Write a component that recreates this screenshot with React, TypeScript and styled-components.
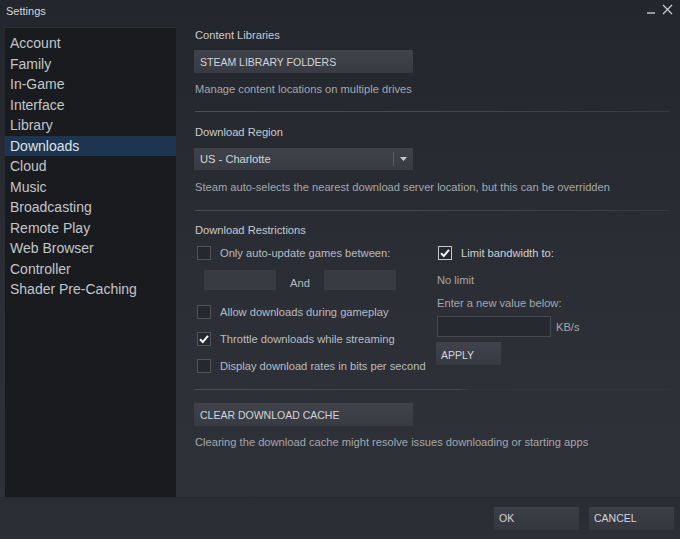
import React from "react";
import styled, { createGlobalStyle } from "styled-components";

const GlobalStyle = createGlobalStyle`
  html, body {
    margin: 0;
    padding: 0;
    background: #25282e;
  }
  * {
    box-sizing: border-box;
  }
`;

const menuItems = [
  "Account",
  "Family",
  "In-Game",
  "Interface",
  "Library",
  "Downloads",
  "Cloud",
  "Music",
  "Broadcasting",
  "Remote Play",
  "Web Browser",
  "Controller",
  "Shader Pre-Caching",
];

function Check({ checked, bright }: { checked?: boolean; bright?: boolean }) {
  return (
    <Box bright={bright}>
      {checked && (
        <svg width="12" height="12" viewBox="0 0 12 12">
          <path
            d="M2 6.2 L4.8 9 L10 2.8"
            fill="none"
            stroke="#f2f3f5"
            strokeWidth="2"
          />
        </svg>
      )}
    </Box>
  );
}

function App() {
  return (
    <>
      <GlobalStyle />
      <Window>
        <TitleBar>
          <Title>Settings</Title>
          <WinControls>
            <svg width="10" height="10" viewBox="0 0 10 10">
              <path d="M1 8 H9" stroke="#c9cbcf" strokeWidth="1.4" />
            </svg>
            <svg width="11" height="11" viewBox="0 0 11 11">
              <path d="M1 1 L10 10 M10 1 L1 10" stroke="#c9cbcf" strokeWidth="1.3" />
            </svg>
          </WinControls>
        </TitleBar>

        <Main>
          <Sidebar>
            {menuItems.map((item) => (
              <MenuItem key={item} active={item === "Downloads"}>
                {item}
              </MenuItem>
            ))}
          </Sidebar>

          <Content>
            <SectionTitle>Content Libraries</SectionTitle>
            <WideButton style={{ marginTop: 8 }}>STEAM LIBRARY FOLDERS</WideButton>
            <Hint>Manage content locations on multiple drives</Hint>
            <Divider gap={15} />

            <SectionTitle top={13}>Download Region</SectionTitle>
            <Dropdown>
              <span>US - Charlotte</span>
              <DropArrow>
                <svg width="7" height="4" viewBox="0 0 7 4">
                  <path d="M0 0 H7 L3.5 4 Z" fill="#c9cbcf" />
                </svg>
              </DropArrow>
            </Dropdown>
            <Hint top={10}>
              Steam auto-selects the nearest download server location, but this can be overridden
            </Hint>
            <Divider gap={16} />

            <SectionTitle top={12}>Download Restrictions</SectionTitle>
            <Restrictions>
              <Column>
                <CheckRow left={2}>
                  <Check />
                  <span>Only auto-update games between:</span>
                </CheckRow>
                <TimeRow>
                  <TimeInput />
                  <And>And</And>
                  <TimeInput />
                </TimeRow>
                <CheckRow left={2} top={13}>
                  <Check />
                  <span>Allow downloads during gameplay</span>
                </CheckRow>
                <CheckRow left={2} top={9}>
                  <Check checked />
                  <span>Throttle downloads while streaming</span>
                </CheckRow>
                <CheckRow left={2} top={9}>
                  <Check />
                  <span>Display download rates in bits per second</span>
                </CheckRow>
              </Column>

              <RightColumn>
                <CheckRow left={1}>
                  <Check checked bright />
                  <Label>Limit bandwidth to:</Label>
                </CheckRow>
                <Plain top={11}>No limit</Plain>
                <Plain top={9}>Enter a new value below:</Plain>
                <RateRow>
                  <RateInput />
                  <span>KB/s</span>
                </RateRow>
                <ApplyButton>APPLY</ApplyButton>
              </RightColumn>
            </Restrictions>
            <ShortDivider />

            <WideButton style={{ marginTop: 13 }}>CLEAR DOWNLOAD CACHE</WideButton>
            <Hint>Clearing the download cache might resolve issues downloading or starting apps</Hint>
          </Content>
        </Main>

        <Footer>
          <FooterButton>OK</FooterButton>
          <FooterButton>CANCEL</FooterButton>
        </Footer>
      </Window>
    </>
  );
}

export default App;

const Window = styled.div`
  width: 680px;
  height: 539px;
  display: flex;
  flex-direction: column;
  background: linear-gradient(180deg, #23262c 0%, #2c2f36 60%, #2e3138 92%);
  font-family: "Liberation Sans", Arial, sans-serif;
  overflow: hidden;
`;

const TitleBar = styled.div`
  height: 27px;
  display: flex;
  align-items: flex-start;
  justify-content: space-between;
  padding: 4px 7px 0 6px;
`;

const Title = styled.div`
  font-size: 11px;
  line-height: 14px;
  color: #d4d6da;
`;

const WinControls = styled.div`
  display: flex;
  gap: 6px;
  align-items: center;
`;

const Main = styled.div`
  flex: 1;
  display: flex;
  min-height: 0;
`;

const Sidebar = styled.div`
  width: 171px;
  margin-left: 5px;
  padding-top: 5px;
  background: #191b1f;
  border-top: 1px solid #2a2d33;
  display: flex;
  flex-direction: column;
`;

const MenuItem = styled.div<{ active?: boolean }>`
  height: 20.5px;
  line-height: 20.5px;
  padding-left: 5px;
  font-size: 14px;
  color: ${(p) => (p.active ? "#dfe3e8" : "#c3c6ca")};
  background: ${(p) => (p.active ? "#1d3550" : "transparent")};
  white-space: nowrap;
`;

const Content = styled.div`
  flex: 1;
  padding: 1px 0 0 19px;
  display: flex;
  flex-direction: column;
  align-items: flex-start;
  font-size: 11.15px;
`;

const SectionTitle = styled.div<{ top?: number }>`
  margin-top: ${(p) => p.top ?? 0}px;
  font-size: 11.15px;
  line-height: 14px;
  color: #c8cace;
`;

const WideButton = styled.div`
  width: 219px;
  height: 23px;
  margin-left: -1px;
  padding-left: 6px;
  display: flex;
  align-items: center;
  font-size: 10.5px;
  color: #d3d5d9;
  background: linear-gradient(180deg, #40434b 0%, #383b42 100%);
  border-radius: 1px;
`;

const Hint = styled.div<{ top?: number }>`
  margin-top: ${(p) => p.top ?? 9}px;
  font-size: 11.15px;
  line-height: 14px;
  color: #a4a7ac;
  white-space: nowrap;
`;

const Divider = styled.div<{ gap: number }>`
  margin-top: ${(p) => p.gap}px;
  width: 475px;
  height: 1px;
  background: linear-gradient(90deg, #4a4d54 0%, #44474e 55%, #363940 100%);
`;

const ShortDivider = styled.div`
  margin-top: 14px;
  width: 475px;
  height: 1px;
  background: linear-gradient(90deg, #4a4d54 0%, #474a51 55%, #33363c 58%, #31343a 100%);
`;

const Dropdown = styled.div`
  margin-top: 9px;
  margin-left: -1px;
  width: 219px;
  height: 22px;
  display: flex;
  align-items: center;
  justify-content: space-between;
  padding-left: 6px;
  font-size: 11.15px;
  color: #d3d5d9;
  background: linear-gradient(180deg, #3f424a 0%, #383b42 100%);
`;

const DropArrow = styled.div`
  width: 20px;
  height: 14px;
  border-left: 1px solid #5a5d64;
  display: flex;
  align-items: center;
  justify-content: center;
`;

const Restrictions = styled.div`
  margin-top: 7px;
  display: flex;
`;

const Column = styled.div`
  width: 242px;
  display: flex;
  flex-direction: column;
`;

const RightColumn = styled.div`
  display: flex;
  flex-direction: column;
  align-items: flex-start;
`;

const CheckRow = styled.div<{ left?: number; top?: number }>`
  height: 18px;
  margin-top: ${(p) => p.top ?? 0}px;
  padding-left: ${(p) => p.left ?? 0}px;
  display: flex;
  align-items: center;
  gap: 9px;
  font-size: 11.15px;
  color: #b9bcc1;
  white-space: nowrap;
`;

const Box = styled.div<{ bright?: boolean }>`
  width: 14px;
  height: 14px;
  flex-shrink: 0;
  border: 1px solid ${(p) => (p.bright ? "#c6c8cc" : "#50535a")};
  background: #25282e;
  display: flex;
  align-items: center;
  justify-content: center;
`;

const Label = styled.span`
  color: #cfd1d5;
`;

const TimeRow = styled.div`
  margin-top: 8px;
  padding-left: 9px;
  display: flex;
  align-items: center;
`;

const TimeInput = styled.div`
  width: 72px;
  height: 20px;
  background: #383b42;
`;

const And = styled.div`
  width: 48px;
  text-align: center;
  color: #b9bcc1;
  font-size: 11.15px;
  padding-top: 5px;
`;

const Plain = styled.div<{ top?: number }>`
  margin-top: ${(p) => p.top ?? 0}px;
  font-size: 11.15px;
  line-height: 14px;
  color: #a4a7ac;
`;

const RateRow = styled.div`
  margin-top: 6px;
  display: flex;
  align-items: center;
  gap: 5px;
  color: #a4a7ac;
  font-size: 11.15px;
`;

const RateInput = styled.div`
  width: 114px;
  height: 21px;
  background: #26292f;
  border: 1px solid #464950;
`;

const ApplyButton = styled.div`
  margin-top: 5px;
  margin-left: -1px;
  width: 65px;
  height: 23px;
  padding: 2px 0 0 5px;
  display: flex;
  align-items: center;
  font-size: 10.5px;
  color: #d3d5d9;
  background: linear-gradient(180deg, #40434b 0%, #373a41 100%);
`;

const Footer = styled.div`
  height: 42px;
  flex-shrink: 0;
  display: flex;
  justify-content: flex-end;
  align-items: flex-start;
  gap: 10px;
  padding: 9px 6px 0 0;
  background: linear-gradient(180deg, #2a2d33 0%, #2c2f35 100%);
  border-top: 1px solid #262930;
`;

const FooterButton = styled.div`
  width: 85px;
  height: 23px;
  padding: 0 0 1px 5px;
  display: flex;
  align-items: center;
  font-size: 10.5px;
  color: #d3d5d9;
  background: linear-gradient(180deg, #3c3f47 0%, #34373e 100%);
`;
